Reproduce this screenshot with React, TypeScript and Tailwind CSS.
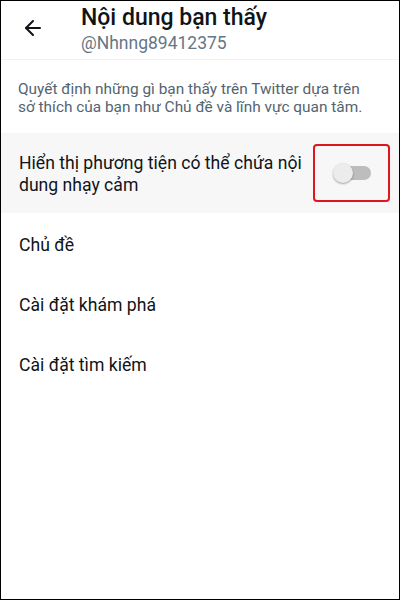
import { ArrowLeft } from 'lucide-react';

const LINKS = ['Chủ đề', 'Cài đặt khám phá', 'Cài đặt tìm kiếm'];

export default function App() {
  return (
    <div
      className="w-[400px] h-[600px] bg-white border border-black overflow-hidden text-[#0f1419]"
      style={{ fontFamily: 'Roboto, "Noto Sans", sans-serif' }}
    >
      {/* Header */}
      <div className="flex items-start h-[59px] border-b border-[#eff3f4]">
        <div className="w-[80px] pl-[20px] pt-[15px]">
          <ArrowLeft size={24} strokeWidth={2} />
        </div>
        <div className="pt-[2px]">
          <h1 className="text-[23px] leading-[30px] font-medium">Nội dung bạn thấy</h1>
          <p className="text-[17.5px] leading-[20px] text-[#657786]">@Nhnng89412375</p>
        </div>
      </div>

      {/* Description */}
      <p className="pl-[17px] pr-[30px] pt-[20px] pb-[17px] text-[15.4px] leading-[18px] text-[#536471]">
        Quyết định những gì bạn thấy trên Twitter dựa trên sở thích của bạn như Chủ đề và lĩnh vực quan tâm.
      </p>

      {/* Sensitive media toggle */}
      <div className="flex items-center justify-between bg-[#f7f7f7] h-[80px] pl-[18px] pr-[9px]">
        <span className="w-[292px] text-[17.6px] leading-[22px] pt-[2px]">
          Hiển thị phương tiện có thể chứa nội dung nhạy cảm
        </span>
        <div className="flex items-center justify-center w-[77px] h-[58px] border-2 border-[#e0161e] rounded-[4px]">
          <div className="relative w-[38px] h-[20px]">
            <div className="absolute left-[4px] right-0 top-[3px] h-[14px] rounded-full bg-[#bdbdbd]" />
            <div className="absolute left-0 top-0 w-[20px] h-[20px] rounded-full bg-[#ececec] shadow-[0_1px_2px_rgba(0,0,0,0.35)]" />
          </div>
        </div>
      </div>

      {/* Settings links */}
      <div className="flex flex-col pt-[2px]">
        {LINKS.map((label) => (
          <div key={label} className="h-[60px] flex items-center px-[18px] text-[17.6px]">
            {label}
          </div>
        ))}
      </div>
    </div>
  );
}
